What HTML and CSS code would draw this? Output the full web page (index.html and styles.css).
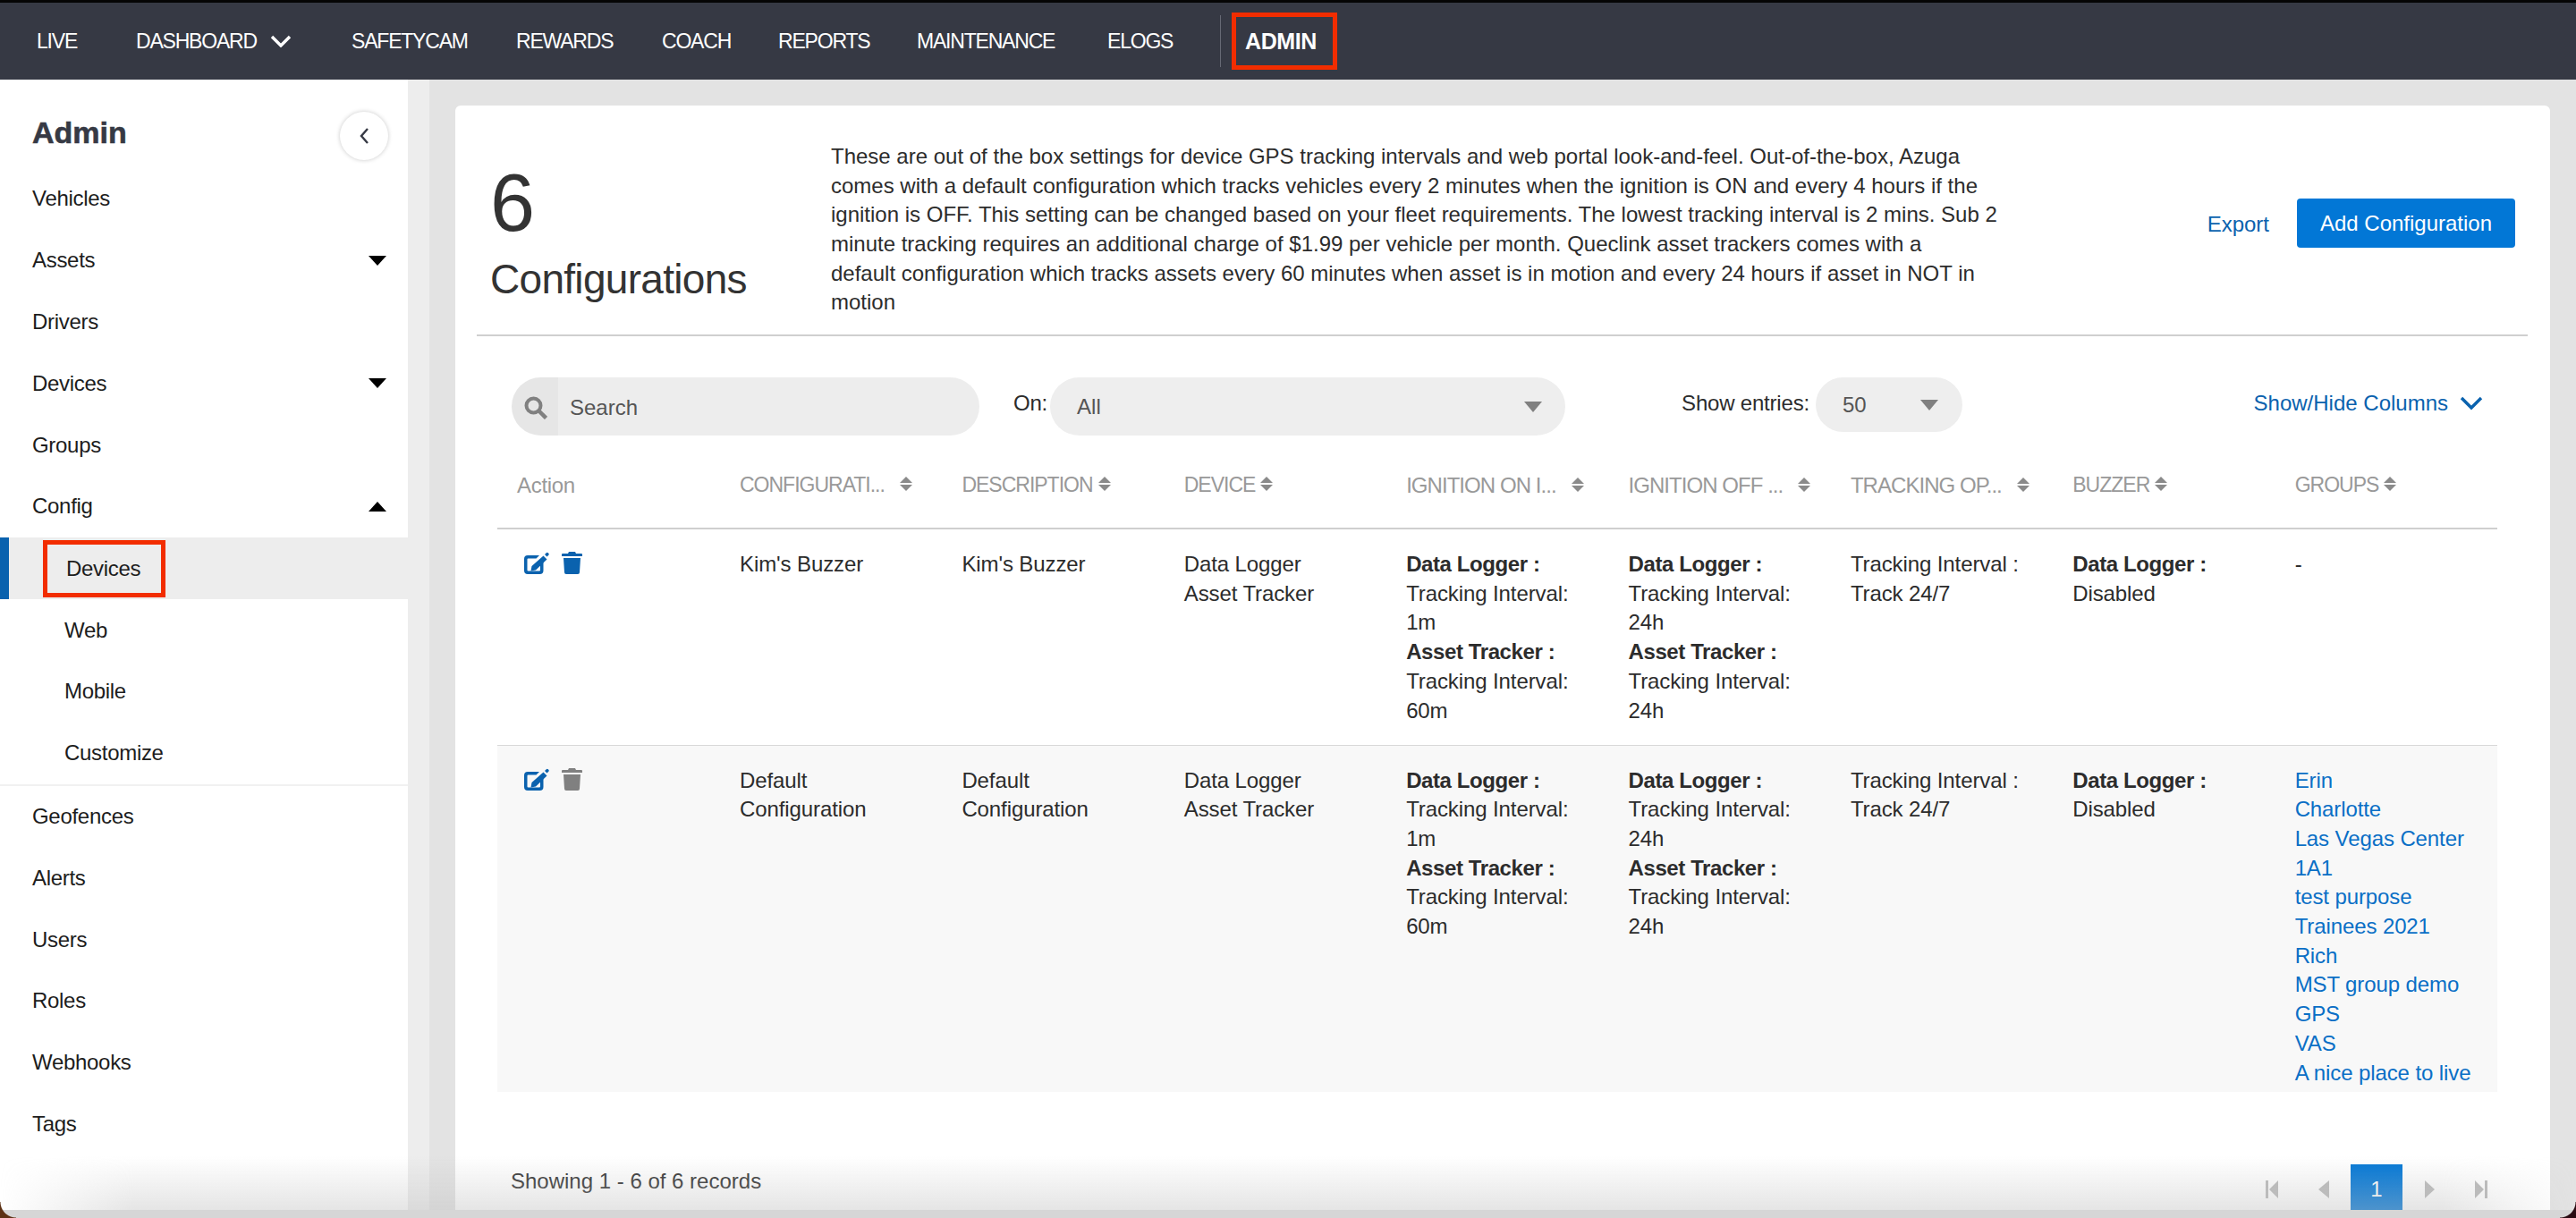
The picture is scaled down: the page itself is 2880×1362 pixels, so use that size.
FILE: index.html
```html
<!DOCTYPE html>
<html lang="en">
<head>
    <meta charset="UTF-8">
    <meta name="viewport" content="width=device-width, initial-scale=1.0">
    <title>Configurations</title>
    <link rel="stylesheet" href="styles.css">
</head>
<body>
    <nav class="topbar">
        <a class="nav-link nav-live">LIVE</a>
        <a class="nav-link nav-dashboard">DASHBOARD
            <svg class="nav-chevron" viewBox="0 0 24 14"><path d="M2 2l10 10L22 2" fill="none" stroke="#fff" stroke-width="3.4"/></svg>
        </a>
        <a class="nav-link nav-safetycam">SAFETYCAM</a>
        <a class="nav-link nav-rewards">REWARDS</a>
        <a class="nav-link nav-coach">COACH</a>
        <a class="nav-link nav-reports">REPORTS</a>
        <a class="nav-link nav-maintenance">MAINTENANCE</a>
        <a class="nav-link nav-elogs">ELOGS</a>
        <span class="nav-divider"></span>
        <a class="nav-link nav-admin">ADMIN</a>
    </nav>
    <div class="layout">
        <aside class="sidebar">
            <div class="sidebar-head">
                <h2>Admin</h2>
                <button class="collapse-btn">
                    <svg viewBox="0 0 12 20" width="12" height="20"><path d="M10 2L3 10l7 8" fill="none" stroke="#363944" stroke-width="2.4"/></svg>
                </button>
            </div>
            <a class="side-item">Vehicles</a>
            <a class="side-item">Assets<span class="tri tri-down"></span></a>
            <a class="side-item">Drivers</a>
            <a class="side-item">Devices<span class="tri tri-down"></span></a>
            <a class="side-item">Groups</a>
            <a class="side-item">Config<span class="tri tri-up"></span></a>
            <div class="side-group">
                <a class="side-item sub active"><span class="marked">Devices</span></a>
                <a class="side-item sub">Web</a>
                <a class="side-item sub">Mobile</a>
                <a class="side-item sub">Customize</a>
            </div>
            <a class="side-item">Geofences</a>
            <a class="side-item">Alerts</a>
            <a class="side-item">Users</a>
            <a class="side-item">Roles</a>
            <a class="side-item">Webhooks</a>
            <a class="side-item">Tags</a>
        </aside>
        <main class="content">
            <section class="card">
                <header class="card-head">
                    <div class="count">
                        <div class="count-num">6</div>
                        <div class="count-label">Configurations</div>
                    </div>
                    <p class="intro">These are out of the box settings for device GPS tracking intervals and web portal look-and-feel. Out-of-the-box, Azuga<br>comes with a default configuration which tracks vehicles every 2 minutes when the ignition is ON and every 4 hours if the<br>ignition is OFF. This setting can be changed based on your fleet requirements. The lowest tracking interval is 2 mins. Sub 2<br>minute tracking requires an additional charge of $1.99 per vehicle per month. Queclink asset trackers comes with a<br>default configuration which tracks assets every 60 minutes when asset is in motion and every 24 hours if asset in NOT in<br>motion</p>
                    <a class="export">Export</a>
                    <button class="add-btn">Add Configuration</button>
                </header>

                <div class="filters">
                    <div class="pill search-pill">
                        <svg class="search-icon" viewBox="0 0 26 26"><circle cx="10.500" cy="10.500" r="8" fill="none" stroke="#808080" stroke-width="4"/><path d="M16.500 16.500l8 8" stroke="#808080" stroke-width="4.500"/></svg>
                        <span>Search</span>
                    </div>
                    <label class="filter-label on-label">On:</label>
                    <div class="pill on-pill"><span>All</span><i class="caret"></i></div>
                    <label class="filter-label entries-label">Show entries:</label>
                    <div class="pill entries-pill"><span>50</span><i class="caret"></i></div>
                    <a class="columns-link">Show/Hide Columns
                        <svg viewBox="0 0 26 16"><path d="M2 2l11 11L24 2" fill="none" stroke="#0a62ae" stroke-width="3.4"/></svg>
                    </a>
                </div>

                <table class="grid">
                    <colgroup>
                        <col class="col-action">
                        <col><col><col><col><col><col><col><col>
                    </colgroup>
                    <thead>
                        <tr>
                            <th>Action</th>
                            <th class="tight w-wide">CONFIGURATI...<i class="sort"></i></th>
                            <th class="tight">DESCRIPTION<i class="sort"></i></th>
                            <th class="tight">DEVICE<i class="sort"></i></th>
                            <th class="caps w-wide">IGNITION ON I...<i class="sort"></i></th>
                            <th class="caps w-wide">IGNITION OFF ...<i class="sort"></i></th>
                            <th class="caps w-wide">TRACKING OP...<i class="sort"></i></th>
                            <th class="tight">BUZZER<i class="sort"></i></th>
                            <th class="tight">GROUPS<i class="sort"></i></th>
                        </tr>
                    </thead>
                    <tbody>
                        <tr class="row-first">
                            <td>
                                <div class="actions">
                                    <svg class="act-edit" viewBox="0 0 28 25"><path fill="#0a62ae" d="M4 4h13l-3.500 3.500H4.500a1 1 0 0 0-1 1V20.500a1 1 0 0 0 1 1H17a1 1 0 0 0 1-1V13l3.500-3.500V21a4 4 0 0 1-4 4H4a4 4 0 0 1-4-4V8a4 4 0 0 1 4-4z"/><path fill="#0a62ae" d="M21.500 4.500l4 4L13 20.500l-5.500 1 1-5.500zM23 3l1.800-1.800a1.500 1.500 0 0 1 2 0l.5.5a1.500 1.500 0 0 1 0 2L25.500 5.500z"/></svg>
                                    <svg class="act-trash" viewBox="0 0 23 25"><path fill="#0a62ae" d="M8 0h7l1 2h6a1 1 0 0 1 1 1v2H0V3a1 1 0 0 1 1-1h6zM2 7h19l-1 16a2 2 0 0 1-2 2H5a2 2 0 0 1-2-2z"/></svg>
                                </div>
                            </td>
                            <td>Kim's Buzzer</td>
                            <td>Kim's Buzzer</td>
                            <td>Data Logger<br>Asset Tracker</td>
                            <td><b>Data Logger :</b><br>Tracking Interval:<br>1m<br><b>Asset Tracker :</b><br>Tracking Interval:<br>60m</td>
                            <td><b>Data Logger :</b><br>Tracking Interval:<br>24h<br><b>Asset Tracker :</b><br>Tracking Interval:<br>24h</td>
                            <td>Tracking Interval :<br>Track 24/7</td>
                            <td><b>Data Logger :</b><br>Disabled</td>
                            <td>-</td>
                        </tr>
                        <tr class="row-alt">
                            <td>
                                <div class="actions">
                                    <svg class="act-edit" viewBox="0 0 28 25"><path fill="#0a62ae" d="M4 4h13l-3.500 3.500H4.500a1 1 0 0 0-1 1V20.500a1 1 0 0 0 1 1H17a1 1 0 0 0 1-1V13l3.500-3.500V21a4 4 0 0 1-4 4H4a4 4 0 0 1-4-4V8a4 4 0 0 1 4-4z"/><path fill="#0a62ae" d="M21.500 4.500l4 4L13 20.500l-5.500 1 1-5.500zM23 3l1.800-1.800a1.500 1.500 0 0 1 2 0l.5.5a1.500 1.500 0 0 1 0 2L25.500 5.500z"/></svg>
                                    <svg class="act-trash" viewBox="0 0 23 25"><path fill="#808080" d="M8 0h7l1 2h6a1 1 0 0 1 1 1v2H0V3a1 1 0 0 1 1-1h6zM2 7h19l-1 16a2 2 0 0 1-2 2H5a2 2 0 0 1-2-2z"/></svg>
                                </div>
                            </td>
                            <td>Default<br>Configuration</td>
                            <td>Default<br>Configuration</td>
                            <td>Data Logger<br>Asset Tracker</td>
                            <td><b>Data Logger :</b><br>Tracking Interval:<br>1m<br><b>Asset Tracker :</b><br>Tracking Interval:<br>60m</td>
                            <td><b>Data Logger :</b><br>Tracking Interval:<br>24h<br><b>Asset Tracker :</b><br>Tracking Interval:<br>24h</td>
                            <td>Tracking Interval :<br>Track 24/7</td>
                            <td><b>Data Logger :</b><br>Disabled</td>
                            <td class="group-links">Erin<br>Charlotte<br>Las Vegas Center<br>1A1<br>test purpose<br>Trainees 2021<br>Rich<br>MST group demo<br>GPS<br>VAS<br>A nice place to live</td>
                        </tr>
                    </tbody>
                </table>

                <footer class="card-foot">
                    <span class="records">Showing 1 - 6 of 6 records</span>
                    <div class="pager">
                        <svg class="pg pg-first" viewBox="0 0 14 20"><path fill="#bbb" d="M0 0h3v20H0zM14 0v20L4 10z"/></svg>
                        <svg class="pg pg-prev" viewBox="0 0 12 20"><path fill="#bbb" d="M12 0v20L0 10z"/></svg>
                        <span class="pg-current">1</span>
                        <svg class="pg pg-next" viewBox="0 0 11 20"><path fill="#bbb" d="M0 0v20l11-10z"/></svg>
                        <svg class="pg pg-last" viewBox="0 0 14 20"><path fill="#bbb" d="M11 0h3v20h-3zM0 0v20l10-10z"/></svg>
                    </div>
                </footer>
            </section>
        </main>
    </div>
    <div class="bottom-shade"></div>
    <div class="bottom-band"></div>
    <div class="corner corner-left"></div>
    <div class="corner corner-right"></div>
</body>
</html>
```

FILE: styles.css
```css
* {
    box-sizing: border-box;
}
html, body {
    margin: 0;
    height: 100%;
}
body {
    position: relative;
    display: flex;
    flex-direction: column;
    height: 100vh;
    overflow: hidden;
    background-color: #d3d3d3;
    color: #2c2c2c;
    font-family: "Liberation Sans", Arial, sans-serif;
    font-size: 24px;
}

/* top nav */
.topbar {
    display: flex;
    align-items: center;
    flex: none;
    height: 89px;
    padding-left: 41px;
    background-color: #363944;
    border-top: 3px solid #050505;
}
.nav-link {
    display: flex;
    align-items: center;
    flex: none;
    color: #fff;
    font-size: 23px;
    letter-spacing: -1.2px;
    white-space: nowrap;
}
.nav-live { width: 111px; }
.nav-dashboard { width: 241px; }
.nav-safetycam { width: 184px; }
.nav-rewards { width: 163px; }
.nav-coach { width: 130px; }
.nav-reports { width: 155px; }
.nav-maintenance { width: 213px; }
.nav-elogs { width: 126px; }
.nav-chevron {
    width: 24px;
    height: 14px;
    margin-left: 15px;
}
.nav-divider {
    width: 1px;
    height: 58px;
    margin-right: 12px;
    background-color: #666974;
}
.nav-admin {
    width: 118px;
    height: 64px;
    padding-left: 10px;
    font-size: 25px;
    letter-spacing: -0.4px;
    font-weight: 700;
    border: 5px solid #f22d00;
}

/* sidebar */
.layout {
    display: flex;
    flex: 1;
    min-height: 0;
}
.sidebar {
    flex: none;
    width: 456px;
    background-color: #fff;
}
.sidebar-head {
    display: flex;
    align-items: center;
    justify-content: space-between;
    height: 99px;
    padding: 26px 22px 0 36px;
}
.sidebar-head h2 {
    margin: 0 0 6px;
    font-size: 34px;
    color: #363944;
    -webkit-text-stroke: 0.6px #363944;
}
.collapse-btn {
    display: flex;
    align-items: center;
    justify-content: center;
    width: 54px;
    height: 54px;
    padding: 0;
    border: none;
    border-radius: 50%;
    background-color: #fff;
    box-shadow: 0 0 5px rgba(0, 0, 0, 0.22);
}
.side-item {
    display: flex;
    align-items: center;
    justify-content: space-between;
    height: 68.8px;
    padding: 0 24px 0 36px;
    color: #1d1d1d;
    letter-spacing: -0.3px;
}
.side-group {
    border-bottom: 2px solid #f1f1f1;
}
.sub {
    padding-left: 72px;
}
.active {
    height: 69.5px;
    padding-left: 38px;
    background-color: #ededed;
    border-left: 10px solid #0a62ae;
    justify-content: flex-start;
}
.marked {
    display: flex;
    align-items: center;
    width: 137px;
    height: 64px;
    padding-left: 21px;
    border: 5px solid #f22d00;
}
.tri {
    width: 0;
    height: 0;
    border-left: 10px solid transparent;
    border-right: 10px solid transparent;
}
.tri-down { border-top: 11px solid #000; }
.tri-up { border-bottom: 11px solid #000; }

/* main card */
.content {
    flex: 1;
    min-width: 0;
    padding: 29px 29px 0 53px;
    background: linear-gradient(to right, #ededed 0, #ededed 24px, #e3e3e3 24px);
}
.card {
    height: 100%;
    padding: 0 25px 0 24px;
    background-color: #fff;
    border-radius: 6px 6px 0 0;
}
.card-head {
    display: flex;
    align-items: center;
    height: 258px;
    padding-left: 15px;
    border-bottom: 2px solid #cfcfcf;
}
.count {
    width: 381px;
    flex: none;
    align-self: flex-start;
    padding-top: 64px;
}
.count-num {
    font-size: 90px;
    line-height: 90px;
    color: #333;
}
.count-label {
    font-size: 46px;
    line-height: 60px;
    margin-top: 10px;
    letter-spacing: -0.7px;
    color: #333;
}
.intro {
    flex: none;
    width: 1400px;
    margin: 22px 0 0;
    font-size: 24px;
    line-height: 32.7px;
    letter-spacing: 0;
    white-space: nowrap;
}
.export {
    margin-top: 9px;
    margin-left: auto;
    margin-right: 31px;
    color: #0a62ae;
}
.add-btn {
    width: 244px;
    height: 55px;
    margin-top: 7px;
    margin-right: 14px;
    padding: 0;
    border: none;
    border-radius: 4px;
    background-color: #0277d6;
    color: #fff;
    font-family: inherit;
    font-size: 24px;
}

/* filters */
.filters {
    display: flex;
    align-items: flex-start;
    height: 131px;
    padding-top: 46px;
    padding-left: 39px;
}
.pill {
    display: flex;
    align-items: center;
    height: 65px;
    background-color: #eee;
    border-radius: 33px;
    color: #555;
}
.search-pill {
    width: 523px;
    padding-left: 14px;
    padding-top: 3px;
    background: linear-gradient(to right, #e6e6e6 0, #e6e6e6 52px, #ededed 52px);
}
.search-icon {
    width: 26px;
    height: 26px;
    margin-right: 25px;
}
.filter-label {
    line-height: 58px;
    letter-spacing: -0.2px;
}
.on-label { margin-left: 38px; margin-right: 3px; }
.on-pill {
    justify-content: space-between;
    width: 576px;
    padding: 0 26px 0 30px;
}
.entries-label { margin-left: 130px; margin-right: 7px; }
.entries-pill {
    justify-content: space-between;
    width: 164px;
    height: 61px;
    padding: 0 27px 0 30px;
}
.caret {
    width: 0;
    height: 0;
    border-left: 10px solid transparent;
    border-right: 10px solid transparent;
    border-top: 12px solid #808080;
}
.columns-link {
    display: flex;
    align-items: center;
    margin-left: auto;
    margin-right: 50px;
    height: 58px;
    color: #0a62ae;
    white-space: nowrap;
}
.columns-link svg {
    width: 26px;
    height: 16px;
    margin-left: 13px;
}

/* table */
.grid {
    width: 2236px;
    margin-left: 23px;
    border-collapse: collapse;
    table-layout: fixed;
}
.col-action {
    width: 249px;
}
.grid th {
    height: 84px;
    padding: 22px 22px 0;
    border-bottom: 2px solid #cfcfcf;
    color: #999;
    font-weight: 400;
    text-align: left;
    vertical-align: top;
    white-space: nowrap;
    letter-spacing: -0.3px;
}
.grid th.tight {
    font-size: 23px;
    letter-spacing: -1px;
}
.grid th.caps {
    letter-spacing: -0.95px;
}
.sort {
    display: inline-block;
    width: 14px;
    height: 16px;
    margin-left: 6px;
    vertical-align: 1px;
}
.sort::before,
.sort::after {
    content: "";
    display: block;
    width: 0;
    height: 0;
    border-left: 7px solid transparent;
    border-right: 7px solid transparent;
}
.sort::before {
    border-bottom: 7px solid #8a8a8a;
    margin-bottom: 2px;
}
.sort::after {
    border-top: 7px solid #8a8a8a;
}
.w-wide .sort {
    margin-left: 17px;
}
.grid td {
    padding: 23px 22px 5px;
    vertical-align: top;
    line-height: 32.7px;
    letter-spacing: -0.1px;
    white-space: nowrap;
}
.grid td b {
    letter-spacing: -0.4px;
}
.row-first td {
    height: 242px;
}
.row-alt td {
    background-color: #f8f8f8;
    border-top: 1px solid #d8d8d8;
}
.actions {
    display: flex;
    gap: 14px;
    margin-top: 2px;
    margin-left: 8px;
}
.act-edit {
    width: 28px;
    height: 25px;
}
.act-trash {
    width: 23px;
    height: 25px;
}
.group-links {
    color: #0a6fc6;
}

/* footer */
.card-foot {
    display: flex;
    justify-content: space-between;
    align-items: flex-start;
    padding: 81px 0 0 38px;
}
.records {
    margin-top: 2px;
    line-height: 34px;
    color: #333;
}
.pager {
    display: flex;
    align-items: center;
    margin-right: 45px;
    color: #fff;
}
.pg {
    height: 20px;
}
.pg-first { width: 14px; }
.pg-prev { width: 12px; margin-left: 45px; margin-right: 24px; }
.pg-next { width: 11px; margin-left: 25px; margin-right: 45px; }
.pg-last { width: 14px; }
.pg-current {
    display: flex;
    align-items: center;
    justify-content: center;
    width: 58px;
    height: 56px;
    background-color: #0277d6;
}

/* window edge over the page */
.bottom-shade {
    position: absolute;
    left: 0;
    right: 0;
    bottom: 9px;
    height: 60px;
    background: linear-gradient(to bottom, rgba(190, 190, 190, 0), rgba(190, 190, 190, 0.4));
    -webkit-mask-image: linear-gradient(to right, transparent 0, #000 150px, #000 2730px, transparent 2880px);
    mask-image: linear-gradient(to right, transparent 0, #000 150px, #000 2730px, transparent 2880px);
    pointer-events: none;
}
.bottom-band {
    position: absolute;
    left: 0;
    right: 0;
    bottom: 0;
    height: 9px;
    background-color: #d6d6d6;
}
.corner {
    position: absolute;
    bottom: 0;
    width: 18px;
    height: 18px;
}
.corner-left {
    left: 0;
    background: radial-gradient(circle at 100% 0, transparent 17px, #5c3114 18px);
}
.corner-right {
    right: 0;
    background: radial-gradient(circle at 0 0, transparent 17px, #2a0b12 18px);
}
```
